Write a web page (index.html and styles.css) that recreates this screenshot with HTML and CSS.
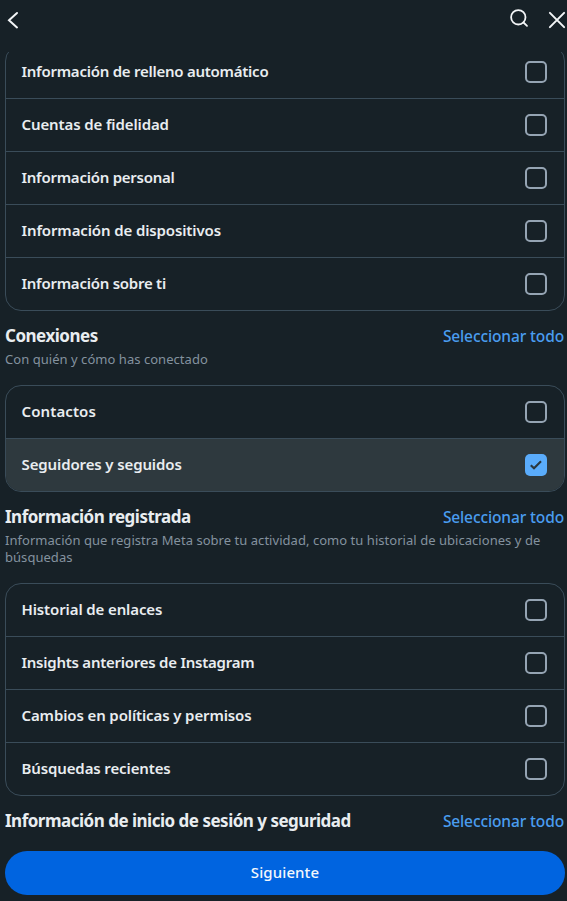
FILE: index.html
```html
<!DOCTYPE html>
<html lang="es">
<head>
<meta charset="utf-8">
<title>Seleccionar información</title>
<link rel="stylesheet" href="styles.css">
</head>
<body>
<div class="dialog">
  <header class="topbar">
    <svg class="icon" width="24" height="24" viewBox="0 0 24 24"><path d="M17 5 9 12.2l8 7.2"/></svg>
    <span class="spacer"></span>
    <svg class="icon search" width="24" height="24" viewBox="0 0 24 24"><circle cx="11.3" cy="11.3" r="7.2"/><path d="m16.5 16.5 3.5 3.4"/></svg>
    <svg class="icon" width="24" height="24" viewBox="0 0 24 24"><path d="m4.9 4.9 14.2 14.2m0-14.2-14.2 14.2"/></svg>
  </header>
  <main class="content">
    <ul class="card first">
      <li class="row"><span>Información de relleno automático</span><i class="check"></i></li>
      <li class="row"><span class="mid">Cuentas de fidelidad</span><i class="check"></i></li>
      <li class="row"><span>Información personal</span><i class="check"></i></li>
      <li class="row"><span class="mid">Información de dispositivos</span><i class="check"></i></li>
      <li class="row"><span>Información sobre ti</span><i class="check"></i></li>
    </ul>
    <section class="heading">
      <div class="line"><h2>Conexiones</h2><a class="all">Seleccionar todo</a></div>
      <p>Con quién y cómo has conectado</p>
    </section>
    <ul class="card">
      <li class="row"><span class="wide">Contactos</span><i class="check"></i></li>
      <li class="row selected"><span class="mid">Seguidores y seguidos</span><i class="check on"><svg width="22" height="22" viewBox="0 0 22 22"><path d="m5.8 11.2 3.2 3.1 7-7"/></svg></i></li>
    </ul>
    <section class="heading">
      <div class="line"><h2>Información registrada</h2><a class="all">Seleccionar todo</a></div>
      <p>Información que registra Meta sobre tu actividad, como tu historial de ubicaciones y de búsquedas</p>
    </section>
    <ul class="card">
      <li class="row"><span class="mid">Historial de enlaces</span><i class="check"></i></li>
      <li class="row"><span>Insights anteriores de Instagram</span><i class="check"></i></li>
      <li class="row"><span class="mid">Cambios en políticas y permisos</span><i class="check"></i></li>
      <li class="row"><span class="mid">Búsquedas recientes</span><i class="check"></i></li>
    </ul>
    <section class="heading">
      <div class="line"><h2>Información de inicio de sesión y seguridad</h2><a class="all">Seleccionar todo</a></div>
    </section>
  </main>
  <footer class="footer"><button class="next">Siguiente</button></footer>
</div>
</body>
</html>
```
FILE: styles.css
```css
* { box-sizing: border-box; }
body {
  margin: 0;
  background: #172127;
  color: #e9edf0;
  font-family: "Noto Sans", sans-serif;
  overflow: hidden;
}
.dialog { display: flex; flex-direction: column; height: 901px; }
.topbar {
  display: flex;
  align-items: center;
  flex: none;
  height: 52px;
  padding: 0 0 12px;
}
.icon {
  fill: none;
  stroke: #f3f5f7;
  stroke-width: 2;
  stroke-linecap: round;
}
.search { stroke-width: 1.8; }
.spacer { flex: 1; }
.search { margin: -4px 14px 0 0; }
.topbar .icon:last-child { margin-right: -2px; }
.content { flex: 1; min-height: 0; overflow: hidden; padding: 0 2px 0 5px; }
.card {
  margin: 0;
  padding: 0;
  list-style: none;
  border: 1px solid #3a4c59;
  border-radius: 16px;
  overflow: hidden;
}
.first { margin-top: -7px; }
.row {
  display: flex;
  align-items: center;
  justify-content: space-between;
  height: 52px;
  padding: 0 17px 0 15.5px;
  font-size: 15px;
  font-weight: 600;
  line-height: 20px;
}
.row span { padding-bottom: 2px; letter-spacing: -0.25px; }
.row .mid { letter-spacing: -0.12px; }
.row .wide { letter-spacing: 0.1px; }
.row + .row { height: 53px; border-top: 1px solid #3a4c59; }
.selected { background: #2e393e; }
.check {
  flex: none;
  width: 22px;
  height: 22px;
  border: 2px solid #95a4b3;
  border-radius: 5px;
}
.on { border: 0; background: #5aacfb; }
.on svg { display: block; fill: none; stroke: #2b3840; stroke-width: 2.2; }
.heading { padding: 13px 0 17px; }
.line { display: flex; justify-content: space-between; align-items: center; height: 24px; }
h2 { margin: 0; font-size: 17px; font-weight: 700; line-height: 24px; letter-spacing: -0.5px; }
.all { margin-right: 1px; color: #4a9df0; font-size: 15.5px; font-weight: 500; line-height: 24px; letter-spacing: -0.12px; }
.heading p { margin: 3px 0 0; color: #84929f; font-size: 13px; line-height: 17px; letter-spacing: 0.04px; }
.footer { flex: none; height: 50px; padding: 0 2px 0 5px; }
.next {
  display: block;
  width: 100%;
  height: 44px;
  padding: 0 0 2px;
  border: 0;
  border-radius: 22px;
  background: #0064e0;
  color: #f3f7fc;
  font: 500 15px/20px "Noto Sans", sans-serif;
  letter-spacing: 0.1px;
}
```
